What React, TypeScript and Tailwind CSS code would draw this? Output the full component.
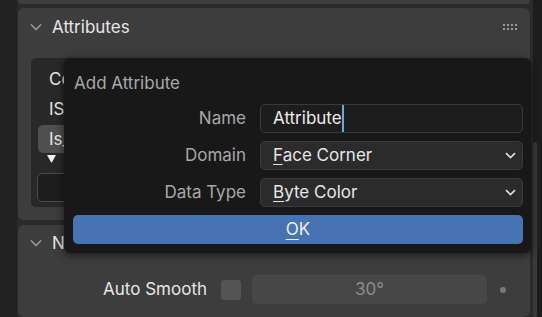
import React from "react";

const font = { fontFamily: "Inter, 'Noto Sans', sans-serif" };

function Chevron() {
  return (
    <svg width="12" height="8" viewBox="0 0 12 8" className="shrink-0">
      <path d="M1 1.5 L6 6.5 L11 1.5" fill="none" stroke="#a3a3a3" strokeWidth="1.3" />
    </svg>
  );
}

function DropChevron() {
  return (
    <svg width="11" height="7" viewBox="0 0 11 7" className="shrink-0">
      <path d="M1 1.2 L5.5 5.5 L10 1.2" fill="none" stroke="#dcdcdc" strokeWidth="1.7" />
    </svg>
  );
}

function GripIcon() {
  return (
    <svg width="15" height="7" viewBox="0 0 15 7">
      {[0, 4, 8, 12].map((x) =>
        [0, 4].map((y) => <rect key={`${x}-${y}`} x={x} y={y} width="2" height="2" fill="#9a9a9a" />)
      )}
    </svg>
  );
}

function Row({ label, children }: { label: string; children: React.ReactNode }) {
  return (
    <div className="flex items-center h-[29px]">
      <div className="w-[182px] text-right text-[17px] text-[#a8a8a8] leading-none">{label}</div>
      <div className="ml-[14px] w-[263px] h-[29px]">{children}</div>
    </div>
  );
}

function Dropdown({ first, rest }: { first: string; rest: string }) {
  return (
    <div className="h-full rounded-[5px] bg-[#2b2b2b] border border-[#3a3a3a] flex items-center pl-[12px] pr-[6px]">
      <span className="flex-1 text-[17px] text-[#e6e6e6] leading-none">
        <span className="underline underline-offset-[3px] decoration-[1px]">{first}</span>
        {rest}
      </span>
      <DropChevron />
    </div>
  );
}

function ListItem({ text, active }: { text: string; active?: boolean }) {
  return (
    <div className={`h-[28px] flex items-center pl-[11px] rounded-[5px] ${active ? "bg-[#4f4f52]" : ""}`}>
      <span className="text-[17px] text-[#e6e6e6] leading-none">{text}</span>
    </div>
  );
}

export default function App() {
  return (
    <div className="relative w-[542px] h-[317px] overflow-hidden bg-[#1d1d1d] flex" style={font}>
      <div className="w-[17px] bg-[#212121]" />
      <div className="w-[516px] bg-[#2b2b2b] pl-[1px] pr-[3px] flex flex-col gap-[4px]">
        <div className="h-[4px] bg-[#3d3d3d] rounded-b-[6px]" />
        <div className="h-[212px] bg-[#3d3d3d] rounded-[6px] flex flex-col">
          <div className="h-[38px] flex items-center pl-[12px] pr-[12px]">
            <Chevron />
            <span className="ml-[10px] flex-1 text-[17px] text-[#e6e6e6] leading-none">Attributes</span>
            <GripIcon />
          </div>
          <div className="pl-[13px] pt-[12px]">
            <div className="w-[420px] h-[149px] bg-[#282828] rounded-[5px] pt-[7px] px-[7px] flex flex-col">
              <div className="flex flex-col gap-[2px]">
                <ListItem text="Co" />
                <ListItem text="IS_" />
                <ListItem text="Is_" active />
              </div>
              <svg width="9" height="8" viewBox="0 0 9 8" className="mt-[2px] ml-[9px]">
                <path d="M0 0 L9 0 L4.5 8 Z" fill="#f0f0f0" />
              </svg>
              <div className="mt-[10px] -ml-[1px] w-[300px] h-[29px] rounded-[5px] bg-[#1d1d1d] border border-[#4a4a4a]" />
            </div>
          </div>
        </div>
        <div className="mt-[1px] flex-1 bg-[#3d3d3d] rounded-[6px] flex flex-col">
          <div className="h-[36px] flex items-center pl-[12px]">
            <Chevron />
            <span className="ml-[10px] text-[17px] text-[#e6e6e6] leading-none">Normals</span>
          </div>
          <div className="mt-[14px] h-[29px] flex items-center">
            <div className="w-[189px] text-right text-[17px] text-[#e6e6e6] leading-none">Auto Smooth</div>
            <div className="ml-[14px] w-[20px] h-[20px] rounded-[3px] bg-[#545454]" />
            <div className="ml-[11px] w-[235px] h-[29px] rounded-[5px] bg-[#474747] flex items-center justify-center text-[17px] text-[#8c8c8c]">
              30°
            </div>
            <div className="ml-[13px] w-[6px] h-[6px] rounded-full bg-[#7a7a7a]" />
          </div>
        </div>
      </div>
      <div className="flex-1 bg-[#1d1d1d] pt-[142px]">
        <div className="w-[4px] h-full bg-[#3a3a3a] rounded-full" />
      </div>

      <div className="absolute left-[64px] top-[58px] w-[467px] h-[195px] bg-[#181818] rounded-[6px] shadow-[0_2px_8px_rgba(0,0,0,0.6)] pt-[15px] pl-[10px] pr-[8px]">
        <div className="h-[20px] flex items-center text-[17px] text-[#a8a8a8] leading-none">Add Attribute</div>
        <div className="-ml-[10px] mt-[11px] flex flex-col gap-[8px]">
          <Row label="Name">
            <div className="h-full rounded-[5px] bg-[#1d1d1d] border border-[#3a3a3a] flex items-center pl-[12px]">
              <span className="text-[17px] text-[#ececec] leading-none">Attribute</span>
              <span className="w-[2px] h-[27px] bg-[#71a2f0]" />
            </div>
          </Row>
          <Row label="Domain">
            <Dropdown first="F" rest="ace Corner" />
          </Row>
          <Row label="Data Type">
            <Dropdown first="B" rest="yte Color" />
          </Row>
        </div>
        <div className="mt-[8px] -ml-[1px] w-[450px] h-[29px] rounded-[5px] bg-[#4772b3] flex items-center justify-center text-[17px] text-[#f0f0f0] leading-none">
          <span>
            <span className="underline underline-offset-[4px] decoration-[1px]">O</span>K
          </span>
        </div>
      </div>
    </div>
  );
}
